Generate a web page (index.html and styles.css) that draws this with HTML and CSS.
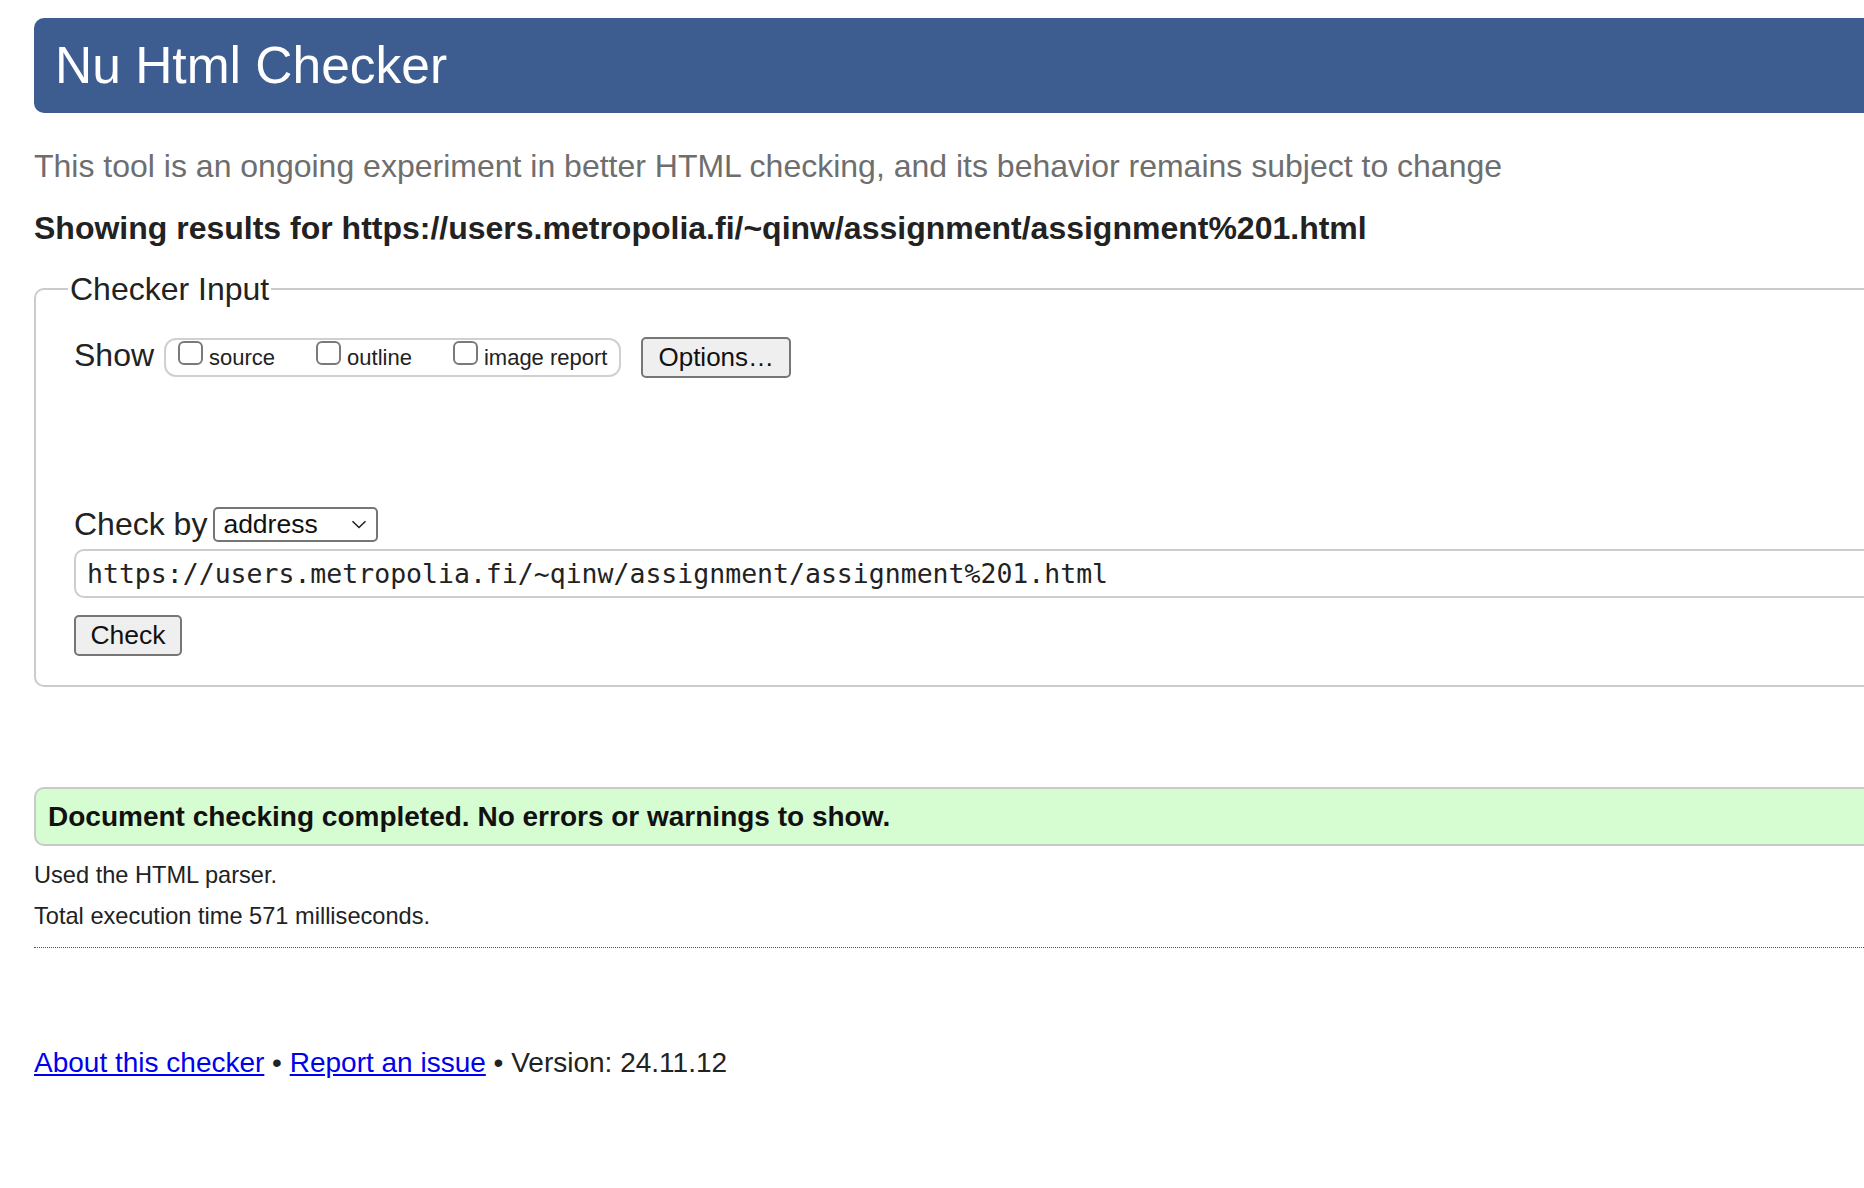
FILE: index.html
```html
<!DOCTYPE html>
<html lang="en">
<head>
<meta charset="utf-8">
<title>Nu Html Checker</title>
<link rel="stylesheet" href="styles.css">
</head>
<body>
<div class="page">
  <header class="banner"><h1 class="banner-title">Nu Html Checker</h1></header>
  <p class="intro">This tool is an ongoing experiment in better HTML checking, and its behavior remains subject to change</p>
  <p class="showing">Showing results for https://users.metropolia.fi/~qinw/assignment/assignment%201.html</p>
  <form class="checker-form">
    <fieldset class="checker-input">
      <legend class="checker-legend">Checker Input</legend>
      <div class="show-row">
        <span class="row-label">Show</span>
        <div class="opts">
          <label class="opt"><input class="box" type="checkbox"><span class="opt-text">source</span></label>
          <label class="opt"><input class="box" type="checkbox"><span class="opt-text">outline</span></label>
          <label class="opt"><input class="box" type="checkbox"><span class="opt-text">image report</span></label>
        </div>
        <button type="button" class="btn btn-options">Options…</button>
      </div>
      <div class="checkby-row">
        <span class="row-label">Check by</span>
        <div class="select-wrap">
          <select class="select"><option>address</option></select>
          <svg class="chevron" width="16" height="9" viewBox="0 0 16 9"><path d="M1.5 1.2 L8 7.5 L14.5 1.2" fill="none" stroke="#222" stroke-width="1.6"/></svg>
        </div>
      </div>
      <input class="url" type="text" value="https://users.metropolia.fi/~qinw/assignment/assignment%201.html">
      <button type="button" class="btn btn-check">Check</button>
    </fieldset>
  </form>
  <div class="success">Document checking completed. No errors or warnings to show.</div>
  <p class="meta meta-first">Used the HTML parser.</p>
  <p class="meta">Total execution time 571 milliseconds.</p>
  <hr class="dots">
  <p class="footer"><a href="#" class="flink">About this checker</a> • <a href="#" class="flink">Report an issue</a> • Version: 24.11.12</p>
</div>
</body>
</html>
```

FILE: styles.css
```css
html {
  overflow: hidden;
  background: #fff;
}
body {
  margin: 0;
  font-family: "Liberation Sans", Arial, sans-serif;
  color: #222;
}
.page {
  padding-left: 34px;
  width: calc(100% + 60px);
  box-sizing: border-box;
}
.banner {
  margin-top: 18px;
  height: 95px;
  background: #3d5c8f;
  border-radius: 10px 0 0 10px;
  padding-left: 21px;
}
.banner-title {
  margin: 0;
  font-size: 51.5px;
  font-weight: normal;
  line-height: 95px;
  color: #fff;
}
.intro {
  margin: 33px 0 0;
  font-size: 32px;
  line-height: 40px;
  color: #6e6e6e;
}
.showing {
  margin: 22px 0 0;
  font-size: 32px;
  line-height: 40px;
  font-weight: bold;
  color: #222;
}
.checker-form {
  margin: 0;
}
.checker-input {
  margin: 21px 0 0;
  border: 2px solid #cbcbcb;
  border-radius: 10px 0 0 10px;
  padding: 26px 0 29px 38px;
  min-inline-size: 0;
}
.checker-legend {
  font-size: 32px;
  line-height: 40px;
  padding: 0 2px;
  margin-left: -6px;
}
.show-row {
  display: flex;
  align-items: flex-start;
  height: 43px;
}
.row-label {
  font-size: 32px;
  line-height: 40px;
}
.opts {
  display: flex;
  align-items: flex-start;
  box-sizing: border-box;
  height: 39px;
  margin-left: 10px;
  margin-top: 3px;
  border: 2px solid #d0d0d0;
  border-radius: 12px;
  padding: 1px 12px 0 12px;
}
.opt {
  display: flex;
  align-items: flex-start;
  margin-right: 41px;
}
.opt:last-child {
  margin-right: 0;
}
.box {
  appearance: none;
  -webkit-appearance: none;
  margin: 0;
  width: 25px;
  height: 24px;
  box-sizing: border-box;
  border: 2px solid #7a7a7a;
  border-radius: 6px;
  background: #fff;
}
.opt-text {
  margin-left: 6px;
  margin-top: 6px;
  font-size: 22px;
  line-height: 22px;
}
.btn {
  font-family: "Liberation Sans", Arial, sans-serif;
  color: #111;
  background: #efefef;
  border: 2px solid #767676;
  border-radius: 5px;
  box-sizing: border-box;
  height: 41px;
  margin: 0;
}
.btn-options {
  margin-left: 20px;
  margin-top: 2px;
  font-size: 26px;
  padding: 0 15px;
}
.checkby-row {
  display: flex;
  align-items: center;
  height: 40px;
  margin-top: 126px;
}
.select-wrap {
  position: relative;
  margin-left: 6px;
  display: flex;
}
.select {
  appearance: none;
  -webkit-appearance: none;
  width: 165px;
  height: 35px;
  box-sizing: border-box;
  border: 2px solid #767676;
  border-radius: 5px;
  background: #fff;
  font-family: "Liberation Sans", Arial, sans-serif;
  font-size: 26.5px;
  color: #111;
  padding: 0 0 0 8px;
  line-height: 31px;
}
.chevron {
  position: absolute;
  left: 138px;
  top: 13px;
  pointer-events: none;
}
.url {
  display: block;
  margin: 5px 0 0;
  width: 100%;
  height: 49px;
  box-sizing: border-box;
  border: 2px solid #cdcdcd;
  border-radius: 10px 0 0 10px;
  padding: 0 0 0 11px;
  font-family: "DejaVu Sans Mono", "Liberation Mono", monospace;
  font-size: 26.5px;
  color: #222;
  background: #fff;
}
.btn-check {
  display: block;
  margin-top: 17px;
  font-size: 26.5px;
  padding: 0 14px;
  width: 108px;
}
.success {
  margin-top: 100px;
  box-sizing: border-box;
  height: 59px;
  border: 2px solid #c9c9c9;
  border-right: 0;
  border-radius: 10px 0 0 10px;
  background: #d6fcd1;
  padding-left: 12px;
  font-size: 28px;
  font-weight: bold;
  line-height: 55px;
  color: #111;
}
.meta {
  margin: 11px 0 0;
  font-size: 23.6px;
  line-height: 30px;
}
.meta-first {
  margin-top: 14px;
}
.dots {
  margin: 16px 0 0;
  border: 0;
  border-top: 1px dotted #555;
  height: 0;
}
.footer {
  margin: 97px 0 0;
  font-size: 28px;
  line-height: 36px;
}
.flink {
  color: #0000ee;
  text-decoration: underline;
}
```
